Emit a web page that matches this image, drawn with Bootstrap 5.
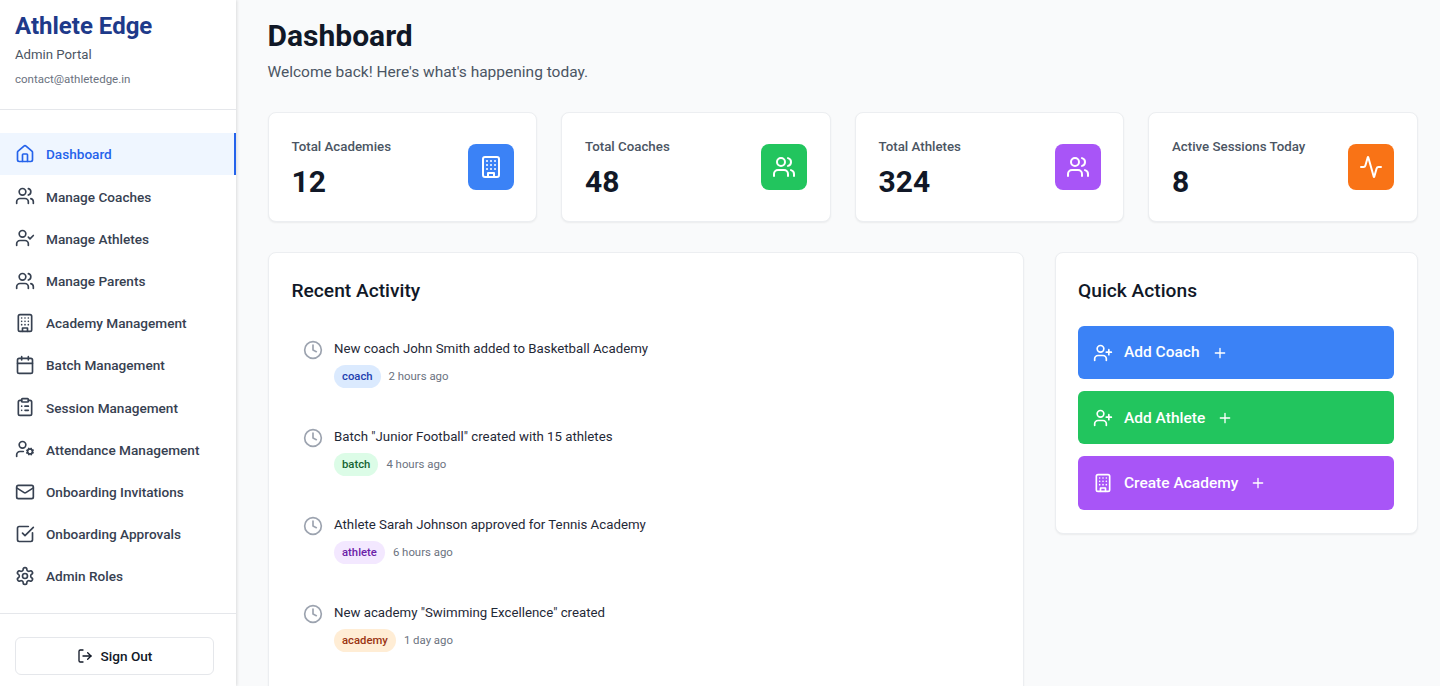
<!DOCTYPE html>
<html>
<head>
  <title>Athlete Edge - Dashboard</title>
  <link href="https://cdn.jsdelivr.net/npm/bootstrap@5.3.0/dist/css/bootstrap.min.css" rel="stylesheet">
  <style>
    body {
      font-family: Roboto, "Noto Sans", sans-serif;
      background: #f9fafb;
      color: #111827;
      height: 100vh;
      overflow: hidden;
    }
    .ico {
      fill: none;
      stroke: currentColor;
      stroke-width: 2;
      stroke-linecap: round;
      stroke-linejoin: round;
      flex-shrink: 0;
    }
    .side {
      width: 236px;
      flex-shrink: 0;
      background: #fff;
      box-shadow: 1px 0 3px rgba(0, 0, 0, .12);
      z-index: 2;
    }
    .side-head {
      height: 110px;
      padding: 10px 15px 0;
      border-bottom: 1px solid #e5e7eb;
    }
    .brand {
      font-size: 24px;
      font-weight: 700;
      line-height: 32px;
      color: #1e3a8a;
      margin: 0;
    }
    .portal {
      font-size: 13.2px;
      line-height: 20px;
      color: #4b5563;
      margin-top: 3px;
    }
    .mail-line {
      font-size: 11.5px;
      line-height: 16px;
      color: #6b7280;
      margin-top: 6px;
    }
    .side-nav {
      padding-top: 23px;
      flex: 1;
    }
    .side-link {
      height: 42.2px;
      padding: 0 15px;
      gap: 11px;
      font-size: 13.6px;
      font-weight: 500;
      color: #374151;
      text-decoration: none;
    }
    .side-link span {
      padding-top: 1px;
    }
    .side-link.on {
      background: #eff6ff;
      color: #2563eb;
      border-right: 2px solid #2563eb;
    }
    .side-foot {
      height: 73px;
      padding: 23px 22px 0 15px;
      border-top: 1px solid #e5e7eb;
    }
    .signout {
      height: 38px;
      gap: 8px;
      font-size: 13.6px;
      font-weight: 500;
      color: #111827;
      background: #fff;
      border: 1px solid #e5e7eb;
      border-radius: 6px;
    }
    .signout span {
      padding-top: 1px;
    }
    .main-area {
      padding: 15.5px 22.5px 0 31.5px;
      min-width: 0;
    }
    .page-title {
      font-size: 30px;
      font-weight: 700;
      line-height: 40px;
      margin: 0;
    }
    .page-sub {
      font-size: 15.5px;
      line-height: 24px;
      color: #4b5563;
      margin: 4.5px 0 0;
    }
    .tile {
      border: 1px solid #eceef1;
      border-radius: 8px;
      box-shadow: 0 1px 2px rgba(0, 0, 0, .06);
      background: #fff;
    }
    .stat-row {
      margin-top: 28px;
    }
    .stat-tile {
      height: 109.5px;
      padding: 23.5px 22.5px 23.5px 23px;
    }
    .stat-label {
      font-size: 13.3px;
      font-weight: 500;
      line-height: 20px;
      color: #4b5563;
    }
    .stat-num {
      font-size: 30px;
      font-weight: 700;
      line-height: 36px;
      margin-top: 7.5px;
      color: #111827;
    }
    .stat-ico {
      width: 46px;
      height: 46px;
      border-radius: 8px;
      color: #fff;
      margin-top: 7px;
    }
    .bg-b { background: #3b82f6; }
    .bg-g { background: #22c55e; }
    .bg-p { background: #a855f7; }
    .bg-o { background: #f97316; }
    .panel-row {
      --bs-gutter-x: 2rem;
      margin-top: 30.5px;
    }
    .panel-head {
      font-size: 19.2px;
      font-weight: 500;
      line-height: 28px;
      margin: 0;
    }
    .activity-tile {
      height: 520px;
      padding: 24px 23px;
    }
    .activity-item {
      height: 88px;
      padding: 0 11.5px;
      gap: 11px;
    }
    .activity-list {
      margin-top: 33.5px;
    }
    .clock {
      color: #9ca3af;
      margin-top: 1px;
    }
    .activity-text {
      font-size: 13.25px;
      line-height: 20px;
      color: #1f2937;
    }
    .activity-meta {
      gap: 8px;
      margin-top: 6px;
    }
    .tag {
      font-size: 11.3px;
      font-weight: 500;
      line-height: 15px;
      padding: 4px 8px;
      border-radius: 999px;
    }
    .tag-coach { background: #dbeafe; color: #1e40af; }
    .tag-batch { background: #dcfce7; color: #166534; }
    .tag-athlete { background: #f3e8ff; color: #6b21a8; }
    .tag-academy { background: #ffedd5; color: #9a3412; }
    .when {
      font-size: 11.4px;
      line-height: 16px;
      color: #6b7280;
    }
    .actions-tile {
      margin-left: -1px;
      padding: 24px 23px 23px 22.5px;
    }
    .action-list {
      margin-top: 21px;
      gap: 12px;
    }
    .action-btn {
      height: 53.2px;
      padding: 0 15px;
      gap: 11px;
      border: 0;
      border-radius: 6px;
      color: #fff;
      font-size: 15.5px;
      font-weight: 500;
    }
    .action-btn span {
      padding-top: 1px;
      margin-right: 1px;
    }
    .action-btn:hover {
      color: #fff;
    }
    .action-btn.bg-b:hover { background: #3b82f6; }
    .action-btn.bg-g:hover { background: #22c55e; }
    .action-btn.bg-p:hover { background: #a855f7; }
  </style>
</head>
<body>
  <svg width="0" height="0" class="position-absolute">
    <symbol id="i-home" viewBox="0 0 24 24"><path d="M15 21v-8a1 1 0 0 0-1-1h-4a1 1 0 0 0-1 1v8"/><path d="M3 10a2 2 0 0 1 .709-1.528l7-5.999a2 2 0 0 1 2.582 0l7 5.999A2 2 0 0 1 21 10v9a2 2 0 0 1-2 2H5a2 2 0 0 1-2-2z"/></symbol>
    <symbol id="i-users" viewBox="0 0 24 24"><path d="M16 21v-2a4 4 0 0 0-4-4H6a4 4 0 0 0-4 4v2"/><circle cx="9" cy="7" r="4"/><path d="M22 21v-2a4 4 0 0 0-3-3.87"/><path d="M16 3.13a4 4 0 0 1 0 7.75"/></symbol>
    <symbol id="i-check" viewBox="0 0 24 24"><path d="M16 21v-2a4 4 0 0 0-4-4H6a4 4 0 0 0-4 4v2"/><circle cx="9" cy="7" r="4"/><polyline points="16 11 18 13 22 9"/></symbol>
    <symbol id="i-building" viewBox="0 0 24 24"><rect x="4" y="2" width="16" height="20" rx="2"/><path d="M9 22v-4h6v4"/><path d="M8 6h.01M16 6h.01M12 6h.01M12 10h.01M12 14h.01M16 10h.01M16 14h.01M8 10h.01M8 14h.01"/></symbol>
    <symbol id="i-cal" viewBox="0 0 24 24"><path d="M8 2v4M16 2v4"/><rect x="3" y="4" width="18" height="18" rx="2"/><path d="M3 10h18"/></symbol>
    <symbol id="i-clip" viewBox="0 0 24 24"><rect x="8" y="2" width="8" height="4" rx="1"/><path d="M16 4h2a2 2 0 0 1 2 2v14a2 2 0 0 1-2 2H6a2 2 0 0 1-2-2V6a2 2 0 0 1 2-2h2"/><path d="M12 11h4M12 16h4M8 11h.01M8 16h.01"/></symbol>
    <symbol id="i-cog-user" viewBox="0 0 24 24"><circle cx="18" cy="15" r="3"/><circle cx="9" cy="7" r="4"/><path d="M10 15H6a4 4 0 0 0-4 4v2"/><path d="m21.7 16.4-.9-.3M15.2 13.9l-.9-.3M16.6 18.7l.3-.9M19.1 12.2l.3-.9M19.6 18.7l-.4-1M16.8 12.3l-.4-1M14.3 16.6l1-.4M20.7 13.8l1-.4"/></symbol>
    <symbol id="i-mail" viewBox="0 0 24 24"><rect x="2" y="4" width="20" height="16" rx="2"/><path d="m22 7-8.97 5.7a1.94 1.94 0 0 1-2.06 0L2 7"/></symbol>
    <symbol id="i-square" viewBox="0 0 24 24"><path d="M21 10.5V19a2 2 0 0 1-2 2H5a2 2 0 0 1-2-2V5a2 2 0 0 1 2-2h11"/><path d="m9 11 3 3L22 4"/></symbol>
    <symbol id="i-gear" viewBox="0 0 24 24"><path d="M12.22 2h-.44a2 2 0 0 0-2 2v.18a2 2 0 0 1-1 1.73l-.43.25a2 2 0 0 1-2 0l-.15-.08a2 2 0 0 0-2.73.73l-.22.38a2 2 0 0 0 .73 2.73l.15.1a2 2 0 0 1 1 1.72v.51a2 2 0 0 1-1 1.74l-.15.09a2 2 0 0 0-.73 2.73l.22.38a2 2 0 0 0 2.73.73l.15-.08a2 2 0 0 1 2 0l.43.25a2 2 0 0 1 1 1.73V20a2 2 0 0 0 2 2h.44a2 2 0 0 0 2-2v-.18a2 2 0 0 1 1-1.73l.43-.25a2 2 0 0 1 2 0l.15.08a2 2 0 0 0 2.73-.73l.22-.39a2 2 0 0 0-.73-2.73l-.15-.08a2 2 0 0 1-1-1.74v-.5a2 2 0 0 1 1-1.74l.15-.09a2 2 0 0 0 .73-2.73l-.22-.38a2 2 0 0 0-2.73-.73l-.15.08a2 2 0 0 1-2 0l-.43-.25a2 2 0 0 1-1-1.73V4a2 2 0 0 0-2-2z"/><circle cx="12" cy="12" r="3"/></symbol>
    <symbol id="i-out" viewBox="0 0 24 24"><path d="M9 21H5a2 2 0 0 1-2-2V5a2 2 0 0 1 2-2h4"/><polyline points="16 17 21 12 16 7"/><line x1="21" y1="12" x2="9" y2="12"/></symbol>
    <symbol id="i-clock" viewBox="0 0 24 24"><circle cx="12" cy="12" r="10"/><polyline points="12 6 12 12 16 14"/></symbol>
    <symbol id="i-add-user" viewBox="0 0 24 24"><path d="M16 21v-2a4 4 0 0 0-4-4H6a4 4 0 0 0-4 4v2"/><circle cx="9" cy="7" r="4"/><line x1="19" y1="8" x2="19" y2="14"/><line x1="22" y1="11" x2="16" y2="11"/></symbol>
    <symbol id="i-plus" viewBox="0 0 24 24"><path d="M5 12h14M12 5v14"/></symbol>
    <symbol id="i-pulse" viewBox="0 0 24 24"><path d="M22 12h-2.48a2 2 0 0 0-1.93 1.46l-2.35 8.36a.25.25 0 0 1-.48 0L9.24 2.18a.25.25 0 0 0-.48 0l-2.35 8.36A2 2 0 0 1 4.49 12H2"/></symbol>
  </svg>

  <div class="d-flex vh-100 overflow-hidden">
    <aside class="side d-flex flex-column">
      <div class="side-head">
        <h1 class="brand">Athlete Edge</h1>
        <div class="portal">Admin Portal</div>
        <div class="mail-line">contact@athletedge.in</div>
      </div>
      <nav class="side-nav">
        <a href="#" class="side-link on d-flex align-items-center"><svg class="ico" width="20" height="20"><use href="#i-home"/></svg><span>Dashboard</span></a>
        <a href="#" class="side-link d-flex align-items-center"><svg class="ico" width="20" height="20"><use href="#i-users"/></svg><span>Manage Coaches</span></a>
        <a href="#" class="side-link d-flex align-items-center"><svg class="ico" width="20" height="20"><use href="#i-check"/></svg><span>Manage Athletes</span></a>
        <a href="#" class="side-link d-flex align-items-center"><svg class="ico" width="20" height="20"><use href="#i-users"/></svg><span>Manage Parents</span></a>
        <a href="#" class="side-link d-flex align-items-center"><svg class="ico" width="20" height="20"><use href="#i-building"/></svg><span>Academy Management</span></a>
        <a href="#" class="side-link d-flex align-items-center"><svg class="ico" width="20" height="20"><use href="#i-cal"/></svg><span>Batch Management</span></a>
        <a href="#" class="side-link d-flex align-items-center"><svg class="ico" width="20" height="20"><use href="#i-clip"/></svg><span>Session Management</span></a>
        <a href="#" class="side-link d-flex align-items-center"><svg class="ico" width="20" height="20"><use href="#i-cog-user"/></svg><span>Attendance Management</span></a>
        <a href="#" class="side-link d-flex align-items-center"><svg class="ico" width="20" height="20"><use href="#i-mail"/></svg><span>Onboarding Invitations</span></a>
        <a href="#" class="side-link d-flex align-items-center"><svg class="ico" width="20" height="20"><use href="#i-square"/></svg><span>Onboarding Approvals</span></a>
        <a href="#" class="side-link d-flex align-items-center"><svg class="ico" width="20" height="20"><use href="#i-gear"/></svg><span>Admin Roles</span></a>
      </nav>
      <div class="side-foot">
        <button class="signout btn w-100 d-flex align-items-center justify-content-center"><svg class="ico" width="16" height="16"><use href="#i-out"/></svg><span>Sign Out</span></button>
      </div>
    </aside>

    <main class="main-area flex-grow-1">
      <h2 class="page-title">Dashboard</h2>
      <p class="page-sub">Welcome back! Here's what's happening today.</p>

      <div class="row gx-4 stat-row">
        <div class="col-3">
          <div class="tile stat-tile d-flex justify-content-between">
            <div><div class="stat-label">Total Academies</div><div class="stat-num">12</div></div>
            <div class="stat-ico bg-b d-flex align-items-center justify-content-center"><svg class="ico" width="24" height="24"><use href="#i-building"/></svg></div>
          </div>
        </div>
        <div class="col-3">
          <div class="tile stat-tile d-flex justify-content-between">
            <div><div class="stat-label">Total Coaches</div><div class="stat-num">48</div></div>
            <div class="stat-ico bg-g d-flex align-items-center justify-content-center"><svg class="ico" width="24" height="24"><use href="#i-users"/></svg></div>
          </div>
        </div>
        <div class="col-3">
          <div class="tile stat-tile d-flex justify-content-between">
            <div><div class="stat-label">Total Athletes</div><div class="stat-num">324</div></div>
            <div class="stat-ico bg-p d-flex align-items-center justify-content-center"><svg class="ico" width="24" height="24"><use href="#i-users"/></svg></div>
          </div>
        </div>
        <div class="col-3">
          <div class="tile stat-tile d-flex justify-content-between">
            <div><div class="stat-label">Active Sessions Today</div><div class="stat-num">8</div></div>
            <div class="stat-ico bg-o d-flex align-items-center justify-content-center"><svg class="ico" width="24" height="24"><use href="#i-pulse"/></svg></div>
          </div>
        </div>
      </div>

      <div class="row panel-row align-items-start">
        <div class="col-8">
          <div class="tile activity-tile">
            <h3 class="panel-head">Recent Activity</h3>
            <div class="activity-list">
              <div class="activity-item d-flex">
                <svg class="ico clock" width="20" height="20"><use href="#i-clock"/></svg>
                <div>
                  <div class="activity-text">New coach John Smith added to Basketball Academy</div>
                  <div class="activity-meta d-flex align-items-center"><span class="tag tag-coach">coach</span><span class="when">2 hours ago</span></div>
                </div>
              </div>
              <div class="activity-item d-flex">
                <svg class="ico clock" width="20" height="20"><use href="#i-clock"/></svg>
                <div>
                  <div class="activity-text">Batch "Junior Football" created with 15 athletes</div>
                  <div class="activity-meta d-flex align-items-center"><span class="tag tag-batch">batch</span><span class="when">4 hours ago</span></div>
                </div>
              </div>
              <div class="activity-item d-flex">
                <svg class="ico clock" width="20" height="20"><use href="#i-clock"/></svg>
                <div>
                  <div class="activity-text">Athlete Sarah Johnson approved for Tennis Academy</div>
                  <div class="activity-meta d-flex align-items-center"><span class="tag tag-athlete">athlete</span><span class="when">6 hours ago</span></div>
                </div>
              </div>
              <div class="activity-item d-flex">
                <svg class="ico clock" width="20" height="20"><use href="#i-clock"/></svg>
                <div>
                  <div class="activity-text">New academy "Swimming Excellence" created</div>
                  <div class="activity-meta d-flex align-items-center"><span class="tag tag-academy">academy</span><span class="when">1 day ago</span></div>
                </div>
              </div>
            </div>
          </div>
        </div>
        <div class="col-4">
          <div class="tile actions-tile">
            <h3 class="panel-head">Quick Actions</h3>
            <div class="action-list d-flex flex-column">
              <button class="action-btn btn bg-b d-flex align-items-center"><svg class="ico" width="20" height="20"><use href="#i-add-user"/></svg><span>Add Coach</span><svg class="ico" width="16" height="16"><use href="#i-plus"/></svg></button>
              <button class="action-btn btn bg-g d-flex align-items-center"><svg class="ico" width="20" height="20"><use href="#i-add-user"/></svg><span>Add Athlete</span><svg class="ico" width="16" height="16"><use href="#i-plus"/></svg></button>
              <button class="action-btn btn bg-p d-flex align-items-center"><svg class="ico" width="20" height="20"><use href="#i-building"/></svg><span>Create Academy</span><svg class="ico" width="16" height="16"><use href="#i-plus"/></svg></button>
            </div>
          </div>
        </div>
      </div>
    </main>
  </div>
</body>
</html>
